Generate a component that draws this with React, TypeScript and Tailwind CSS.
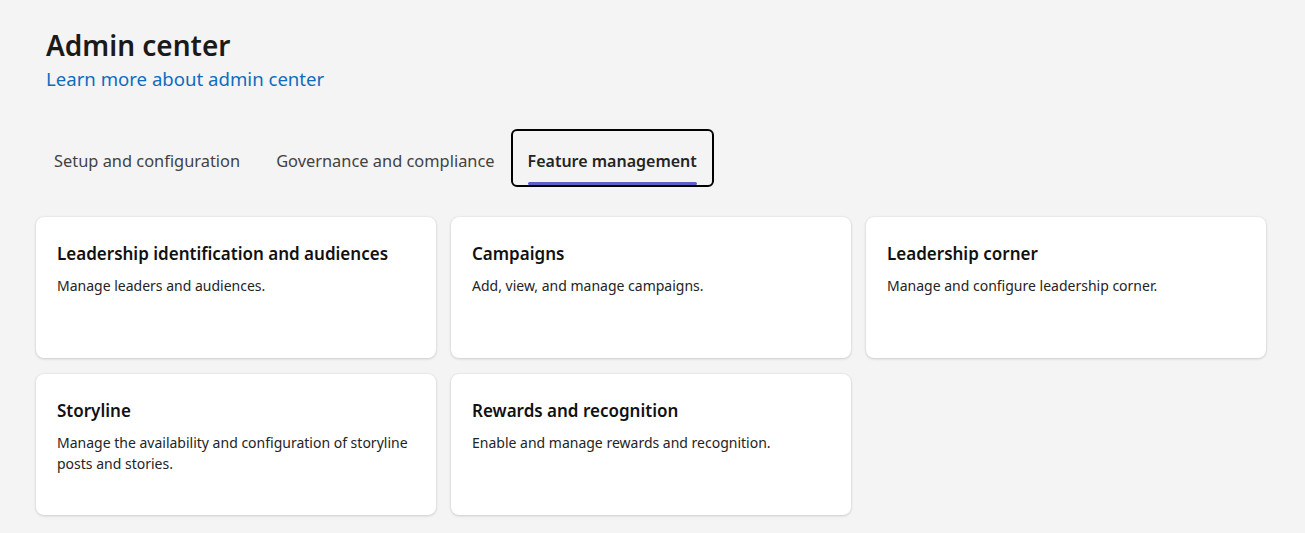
import React from 'react';

type Card = { title: string; description: string };

const cards: Card[] = [
  { title: 'Leadership identification and audiences', description: 'Manage leaders and audiences.' },
  { title: 'Campaigns', description: 'Add, view, and manage campaigns.' },
  { title: 'Leadership corner', description: 'Manage and configure leadership corner.' },
  { title: 'Storyline', description: 'Manage the availability and configuration of storyline posts and stories.' },
  { title: 'Rewards and recognition', description: 'Enable and manage rewards and recognition.' },
];

const tabs = ['Setup and configuration', 'Governance and compliance', 'Feature management'];

export default function App() {
  const selected = 2;
  return (
    <div className="min-h-[533px] bg-[#f4f4f4] px-[36px] pt-[27px] text-[#242424] [font-family:'Noto_Sans',sans-serif]">
      <div className="px-[10px]">
        <h1 className="text-[28px] font-semibold leading-[36px] text-[#1a1a1a]">Admin center</h1>
        <a href="#" className="mt-[4px] block text-[18.6px] leading-[24px] text-[#0f6cbd]">
          Learn more about admin center
        </a>
      </div>

      <div className="mt-[38px] flex items-center">
        {tabs.map((tab, i) => (
          <button
            key={tab}
            className={`relative h-[58px] rounded-[6px] pt-[6px] ${
              i === selected
                ? 'ml-[-2px] border-2 border-black px-[15px] text-[16px] font-semibold text-[#242424]'
                : 'border-2 border-transparent px-[16px] text-[16.4px] text-[#424242]'
            }`}
          >
            {tab}
            {i === selected && (
              <span className="absolute bottom-0 left-[15px] right-[15px] h-[3px] rounded-full bg-[#5b5fc7]" />
            )}
          </button>
        ))}
      </div>

      <div className="mt-[30px] grid w-[1230px] grid-cols-3 gap-x-[15px] gap-y-[16px]">
        {cards.map((card) => (
          <div
            key={card.title}
            className="h-[141px] rounded-[8px] bg-white px-[21px] pt-[25px] shadow-[0_1px_3px_rgba(0,0,0,0.14),0_0_2px_rgba(0,0,0,0.1)]"
          >
            <div className="text-[17px] font-semibold leading-[24px] text-[#111]">{card.title}</div>
            <div className="mt-[9px] text-[14px] leading-[21px] text-[#242424]">{card.description}</div>
          </div>
        ))}
      </div>
    </div>
  );
}
